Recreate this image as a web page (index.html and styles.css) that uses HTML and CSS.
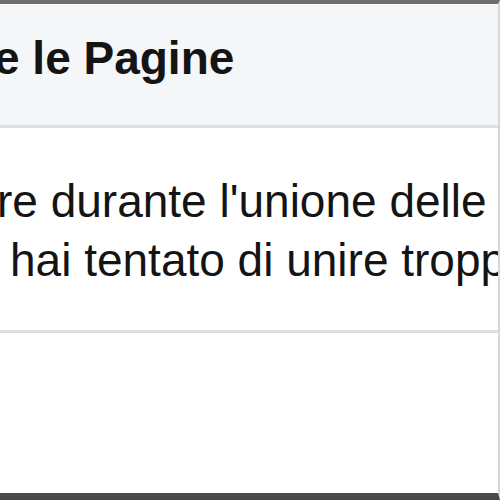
FILE: index.html
```html
<!DOCTYPE html>
<html>
    <head>
        <meta charset="utf-8">
        <title>Unisci le Pagine</title>
        <link rel="stylesheet" href="styles.css">
    </head>
    <body>
        <div id="dialog">
            <div class="dialog-header">
                <h2 class="dialog-title">e le Pagine</h2>
            </div>
            <div class="dialog-body">
                <p class="line line-first">re durante l'unione delle</p>
                <p class="line line-second">hai tentato di unire troppe Pagine</p>
            </div>
            <div class="dialog-footer"></div>
        </div>
    </body>
</html>
```

FILE: styles.css
```css
html, body, h2, p {
    margin: 0;
    padding: 0;
}

body {
    background: #ffffff;
    font-family: "Liberation Sans", Arial, sans-serif;
}

#dialog {
    width: 500px;
    height: 500px;
    box-sizing: border-box;
    border-top: 4px solid #6d6d6d;
    border-right: 2px solid #d6d7d9;
    border-bottom: 7px solid #4a4a4a;
    overflow: hidden;
    display: flex;
    flex-direction: column;
    white-space: nowrap;
}

.dialog-header {
    height: 124px;
    box-sizing: border-box;
    padding-top: 28px;
    background: #f5f6f7;
    border-top: 1px solid #ffffff;
    border-bottom: 3px solid #dddfe2;
}

.dialog-title {
    margin-left: -6px;
    font-size: 46px;
    line-height: 50px;
    font-weight: bold;
    color: #141414;
}

.dialog-body {
    padding: 44px 0 40px 0;
    border-bottom: 3px solid #dddfe2;
}

.line {
    font-size: 46px;
    line-height: 59px;
    color: #141414;
}

.line-first {
    margin-left: -3px;
}

.line-second {
    margin-left: 10px;
}

.dialog-footer {
    flex: 1;
    background: #ffffff;
}
```
